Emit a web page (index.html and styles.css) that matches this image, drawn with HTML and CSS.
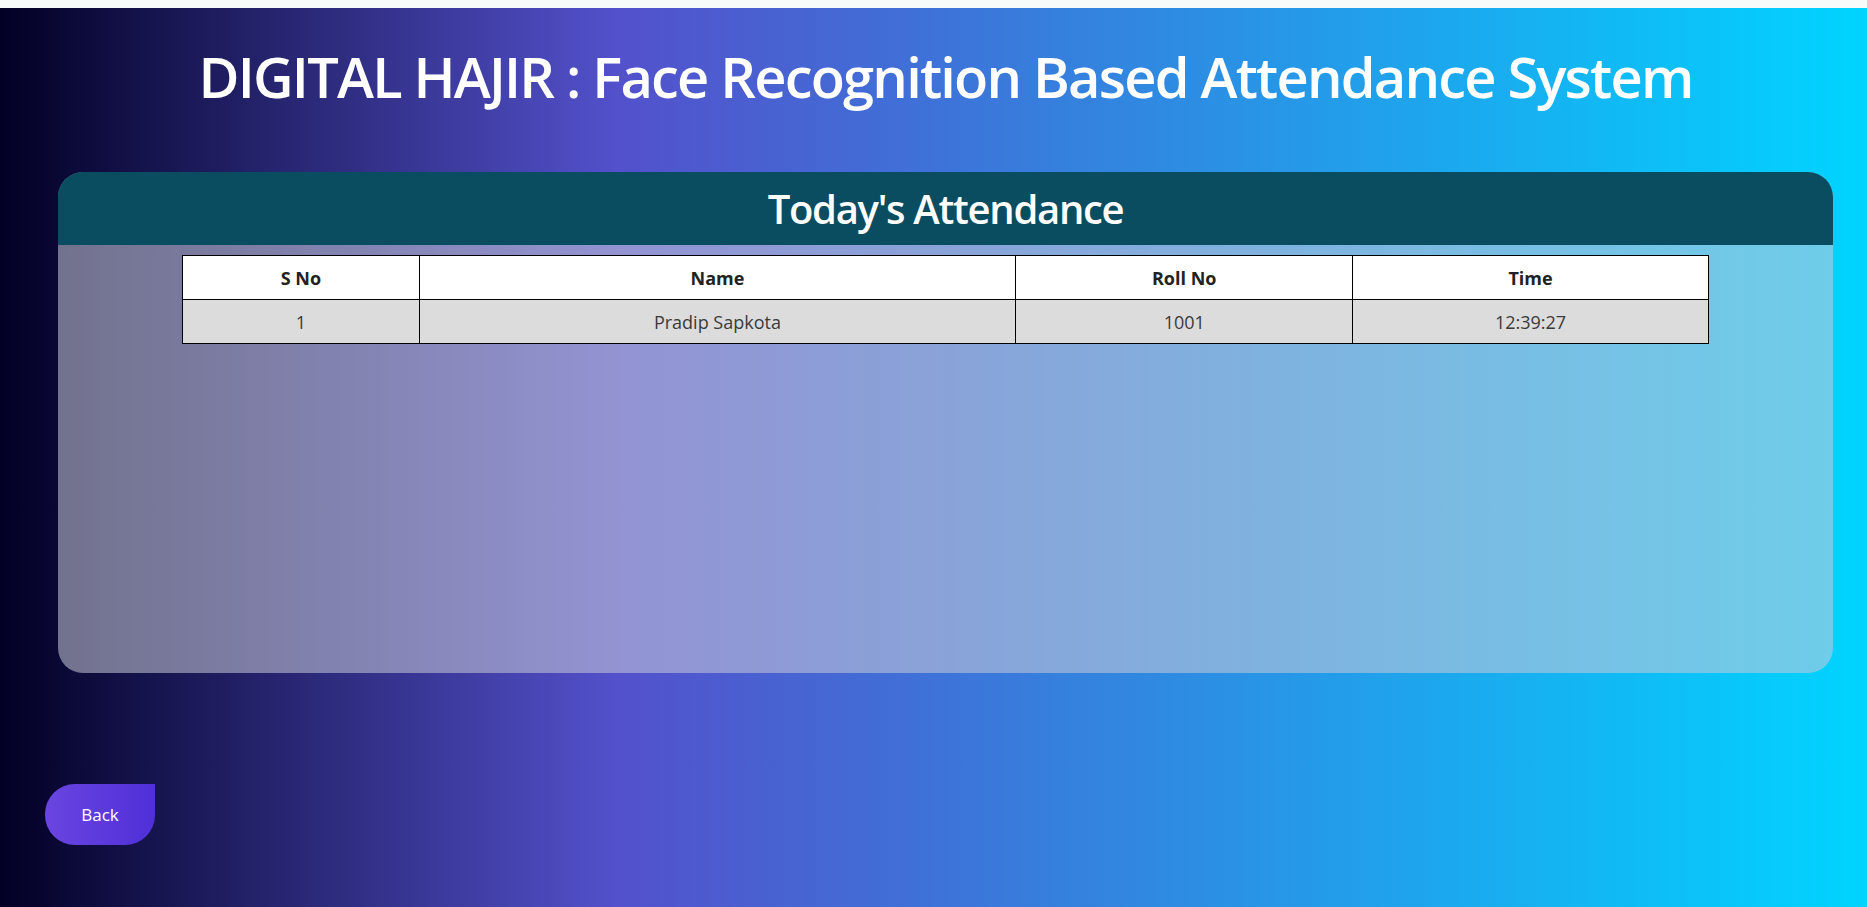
FILE: index.html
```html
<!DOCTYPE html>
<html lang="en">
<head>
<meta charset="utf-8">
<title>Digital Hajir</title>
<link rel="stylesheet" href="styles.css">
</head>
<body>
<div class="strip"></div>
<main class="wrap">
  <h1 class="title">DIGITAL HAJIR : Face Recognition Based Attendance System</h1>
  <section class="card">
    <h2 class="card-head">Today's Attendance</h2>
    <div class="card-body">
      <table class="att">
        <thead>
          <tr>
            <th class="c-sno">S No</th>
            <th class="c-name">Name</th>
            <th class="c-roll">Roll No</th>
            <th class="c-time">Time</th>
          </tr>
        </thead>
        <tbody>
          <tr>
            <td>1</td>
            <td>Pradip Sapkota</td>
            <td>1001</td>
            <td>12:39:27</td>
          </tr>
        </tbody>
      </table>
    </div>
  </section>
</main>
<div class="actions">
  <a class="back" href="#">Back</a>
</div>
</body>
</html>
```
FILE: styles.css
```css
html, body {
  margin: 0;
  padding: 0;
}
body {
  min-height: 100vh;
  font-family: "Open Sans", "Noto Sans", sans-serif;
  background: linear-gradient(90deg, #020024 0%, #5351cb 33%, #00d4ff 100%);
  color: #fff;
}
.strip {
  height: 8px;
  background: #f7fbfa;
}
.wrap {
  padding-left: 24px;
}
.title {
  margin: 0;
  padding-top: 35px;
  font-size: 56px;
  line-height: 67px;
  font-weight: 600;
  text-align: center;
  color: #fff;
  letter-spacing: -1.8px;
}
.card {
  margin: 62px 34px 0 34px;
  height: 501px;
  border-radius: 25px;
  overflow: hidden;
  background: rgba(201, 203, 216, 0.55);
  display: flex;
  flex-direction: column;
}
.card-head {
  margin: 0;
  height: 73px;
  line-height: 73px;
  background: #0b4d60;
  color: #fff;
  text-align: center;
  font-size: 40px;
  font-weight: 600;
  letter-spacing: -1.3px;
}
.card-body {
  padding-top: 10px;
}
.att {
  width: 86%;
  margin: 0 auto;
  border-collapse: collapse;
  font-size: 18px;
}
.att th, .att td {
  border: 1px solid #000;
  text-align: center;
  padding: 0;
  height: 43px;
  line-height: 24px;
}
.att th {
  background: #fff;
  color: #222;
  font-weight: 700;
}
.att td {
  background: #dcdcdc;
  color: #3a3a3a;
  font-weight: 400;
}
.c-sno { width: 15.5%; }
.c-name { width: 39.1%; }
.c-roll { width: 22.1%; }
.c-time { width: 23.3%; }
.actions {
  padding: 111px 0 0 45px;
}
.back {
  display: flex;
  align-items: center;
  justify-content: center;
  width: 110px;
  height: 61px;
  border-radius: 30px 0 30px 30px;
  background: linear-gradient(90deg, #6a45e0, #4f2fd8);
  color: #fff;
  text-decoration: none;
  font-size: 17px;
}
```
